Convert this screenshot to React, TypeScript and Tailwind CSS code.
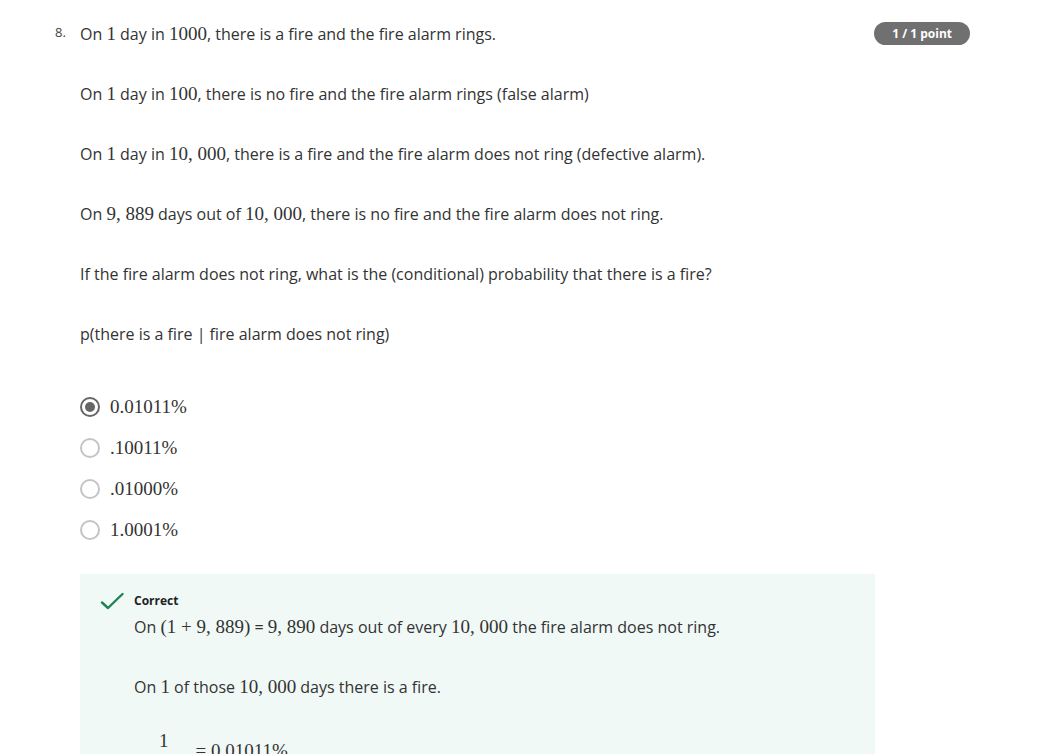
import React from 'react';

const M: React.FC<{ children: React.ReactNode }> = ({ children }) => (
  <span className="font-['Liberation_Serif','DejaVu_Serif',serif] text-[19px]">{children}</span>
);

const questionLines: React.ReactNode[] = [
  <>On <M>1</M> day in <M>100</M>, there is no fire and the fire alarm rings (false alarm)</>,
  <>On <M>1</M> day in <M>10, 000</M>, there is a fire and the fire alarm does not ring (defective alarm).</>,
  <>On <M>9, 889</M> days out of <M>10, 000</M>, there is no fire and the fire alarm does not ring.</>,
  <>If the fire alarm does not ring, what is the (conditional) probability that there is a fire?</>,
  <>p(there is a fire | fire alarm does not ring)</>,
];

const options = [
  { label: '0.01011%', checked: true },
  { label: '.10011%', checked: false },
  { label: '.01000%', checked: false },
  { label: '1.0001%', checked: false },
];

const Radio: React.FC<{ checked: boolean }> = ({ checked }) =>
  checked ? (
    <span className="flex h-5 w-5 items-center justify-center rounded-full border-2 border-[#666]">
      <span className="h-[10px] w-[10px] rounded-full bg-[#666]" />
    </span>
  ) : (
    <span className="h-5 w-5 rounded-full border-2 border-[#c4c4c4] bg-white" />
  );

export default function App() {
  return (
    <div className="min-h-screen bg-white font-['Open_Sans','Liberation_Sans',sans-serif] text-[#333]">
      <div className="flex w-[970px] pt-[22px]">
        <div className="mt-[-2px] w-[80px] shrink-0 pl-[55px] text-[13px] leading-6 text-[#444]">8.</div>
        <div className="flex-1">
          <div className="flex items-start justify-between">
            <p className="text-[16px] leading-6">
              On <M>1</M> day in <M>1000</M>, there is a fire and the fire alarm rings.
            </p>
            <span className="rounded-full bg-[#707070] px-[18px] py-[3px] text-[12px] font-bold leading-[17px] text-white">
              1 / 1 point
            </span>
          </div>
          {questionLines.map((line, i) => (
            <p key={i} className="mt-9 text-[16px] leading-6">
              {line}
            </p>
          ))}

          <div className="mt-[49px] flex flex-col gap-[17px]">
            {options.map((o) => (
              <label key={o.label} className="flex h-6 items-center gap-[10px]">
                <Radio checked={o.checked} />
                <span className="font-['Liberation_Serif','DejaVu_Serif',serif] text-[19px] text-[#333]">{o.label}</span>
              </label>
            ))}
          </div>

          <div className="mt-[32px] w-[795px] bg-[#f0f9f6] pb-10 pl-[20px] pt-[18px]">
            <div className="flex gap-[10px]">
              <svg width="24" height="24" viewBox="0 0 24 24" className="mt-[-2px] shrink-0" fill="none">
                <path d="M2 12.5l6 5.5L22.5 4" stroke="#1f8354" strokeWidth="2.4" strokeLinecap="round" strokeLinejoin="round" />
              </svg>
              <div>
                <div className="text-[12px] font-bold leading-[18px] text-[#222]">Correct</div>
                <p className="mt-[5px] text-[16px] leading-6">
                  On <M>(1 + 9, 889)</M> = <M>9, 890</M> days out of every <M>10, 000</M> the fire alarm does not ring.
                </p>
                <p className="mt-9 text-[16px] leading-6">
                  On <M>1</M> of those <M>10, 000</M> days there is a fire.
                </p>
                <div className="mt-[30px] flex items-start pl-[6px] font-['Liberation_Serif','DejaVu_Serif',serif] text-[19px]">
                  <span className="inline-flex flex-col items-center">
                    <span className="leading-6">1</span>
                    <span className="my-[2px] h-px w-[46px] bg-[#333]" />
                    <span className="leading-6">9, 890</span>
                  </span>
                  <span className="ml-[8px] mt-[10px] leading-6">= 0.01011%</span>
                </div>
              </div>
            </div>
          </div>
        </div>
      </div>
    </div>
  );
}
